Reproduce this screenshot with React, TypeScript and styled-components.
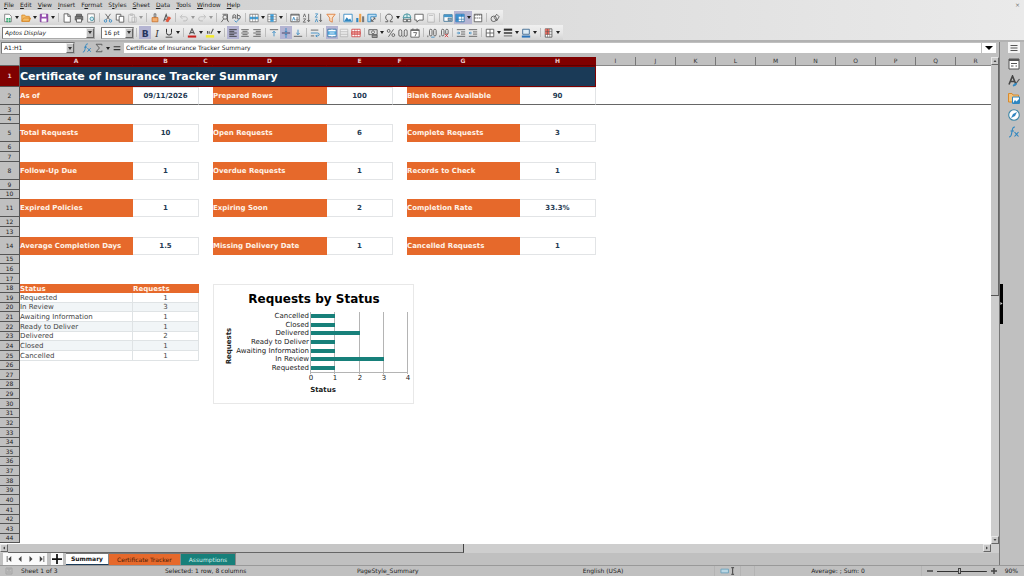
import React from 'react';
import styled, { createGlobalStyle, css } from 'styled-components';

const GlobalStyle = createGlobalStyle`
  * { box-sizing: border-box; }
  html, body { margin: 0; padding: 0; }
  body { background: #c0c0c0; color: #222; font: 6px/8px "DejaVu Sans", sans-serif; overflow: hidden; }
  button, input, select { font: inherit; color: inherit; margin: 0; padding: 0; border: 0; border-radius: 0; background: none; outline: none; }
  svg { display: block; }
`;

/* ---------- window frame ---------- */

const Window = styled.div`
  display: flex;
  flex-direction: column;
  height: 100vh;
`;

const Chrome = styled.header`
  background: linear-gradient(90deg, #cbcbcb, #dcdcdc 50%, #eaeaea);
  border-bottom: 2px solid #b2b2b2;
`;

const MenuBar = styled.nav`
  display: flex;
  align-items: center;
  gap: 6px;
  height: 10px;
  padding: 0 4px;
`;

const MenuItem = styled.button`
  line-height: 8px;
  white-space: nowrap;
`;

const CloseButton = styled.button`
  margin-left: auto;
  color: #777;
`;

const Toolbar = styled.div`
  display: flex;
  align-items: center;
  width: fit-content;
  height: 15px;
  padding: 0 2px;
  background: linear-gradient(#f0f0f0, #e7e7e7 50%, #d4d4d4);
`;

const ToolButton = styled.button<{ $active?: boolean; $faded?: boolean }>`
  display: flex;
  align-items: center;
  justify-content: center;
  width: 12px;
  height: 13px;
  background: ${(p) => (p.$active ? '#b4b4d2' : 'none')};
  svg { opacity: ${(p) => (p.$faded ? 0.3 : 1)}; }
`;

const DropArrow = styled.button<{ $active?: boolean; $faded?: boolean }>`
  display: flex;
  align-items: center;
  justify-content: center;
  width: 6px;
  height: 13px;
  background: ${(p) => (p.$active ? '#b4b4d2' : 'none')};
  opacity: ${(p) => (p.$faded ? 0.4 : 1)};
  &::after {
    content: '';
    border: 2px solid transparent;
    border-top: 3px solid #222;
    border-bottom: 0;
  }
`;

const Separator = styled.span`
  width: 1px;
  height: 9px;
  margin: 0 2px;
  background: #bdbdbd;
`;

const Combo = styled.div<{ $width: number }>`
  display: flex;
  width: ${(p) => p.$width}px;
  height: 12px;
  background: #fff;
  border: 1px solid #777;
  border-right-color: #aaa;
  border-bottom-color: #aaa;
`;

const comboText = css`
  flex: 1;
  min-width: 0;
  padding: 0 2px;
  line-height: 10px;
`;

const ComboSelect = styled.select<{ $italic?: boolean }>`
  ${comboText}
  appearance: none;
  font-style: ${(p) => (p.$italic ? 'italic' : 'normal')};
`;

const ComboInput = styled.input`
  ${comboText}
`;

const ComboButton = styled.button`
  display: flex;
  align-items: center;
  justify-content: center;
  width: 8px;
  background: #c4c4c4;
  border: 1px solid #eee;
  border-right-color: #666;
  border-bottom-color: #666;
  &::after {
    content: '';
    border: 2px solid transparent;
    border-top: 3px solid #333;
    border-bottom: 0;
  }
`;

const ToolGap = styled.span`
  width: 6px;
`;

/* ---------- main area ---------- */

const Main = styled.main`
  display: flex;
  flex: 1;
  min-height: 0;
`;

const Workspace = styled.section`
  display: flex;
  flex-direction: column;
  flex: 1;
  min-width: 0;
`;

const FormulaBar = styled.div`
  display: flex;
  align-items: center;
  height: 15px;
  padding: 0 3px 3px 1px;
`;

const FormulaTools = styled.div`
  display: flex;
  align-items: center;
  padding: 0 1px 0 6px;
`;

const FormulaInput = styled.input`
  flex: 1;
  min-width: 0;
  height: 10px;
  padding: 0 2px;
  background: #fff;
  line-height: 10px;
`;

const ExpandButton = styled.button`
  display: flex;
  align-items: center;
  justify-content: center;
  width: 14px;
  height: 10px;
  margin-left: 1px;
  background: #fff;
  &::after {
    content: '';
    border: 4px solid transparent;
    border-top: 4px solid #000;
    border-bottom: 0;
  }
`;

const SheetRow = styled.div`
  display: flex;
  flex: 1;
  min-height: 0;
`;

const Sheet = styled.div`
  position: relative;
  flex: 1;
  min-width: 0;
  overflow: hidden;
  background: #fff;
`;

const Grid = styled.table`
  width: 996px;
  table-layout: fixed;
  border-collapse: separate;
  border-spacing: 0;
  font-size: 7px;
  line-height: 8px;
`;

const ColumnHead = styled.th<{ $selected?: boolean }>`
  height: 9px;
  padding: 0;
  font-size: 6px;
  font-weight: ${(p) => (p.$selected ? 700 : 400)};
  color: ${(p) => (p.$selected ? '#e8c8c8' : '#333')};
  background: ${(p) => (p.$selected ? '#800000' : '#c0c0c0')};
  border-right: 1px solid ${(p) => (p.$selected ? '#800000' : '#777')};
  border-bottom: 1px solid ${(p) => (p.$selected ? '#5c0000' : '#888')};
`;

const Corner = styled.td`
  padding: 0;
  background: #c0c0c0;
  border-right: 1px solid #888;
  border-bottom: 1px solid #666;
`;

const RowHead = styled.th<{ $selected?: boolean }>`
  padding: 0;
  font-size: 6px;
  font-weight: ${(p) => (p.$selected ? 700 : 400)};
  color: ${(p) => (p.$selected ? '#e8c8c8' : '#222')};
  background: ${(p) => (p.$selected ? '#800000' : '#c0c0c0')};
  border-right: 1px solid #555;
  border-bottom: 1px solid #555;
`;

type CellKind = 'blank' | 'label' | 'value' | 'head' | 'text' | 'count' | 'title';

const kinds: Record<CellKind, ReturnType<typeof css>> = {
  blank: css``,
  title: css`
    color: #fff;
    background: #1a3a57;
    border: 1px solid #800000;
    border-left: 0;
    font-size: 11px;
    font-weight: 700;
    line-height: 16px;
  `,
  label: css`
    color: #fff3e8;
    background: #e6692b;
    font-weight: 700;
  `,
  value: css`
    color: #1f3b54;
    border: 1px solid #e2e4e6;
    border-left: 0;
    font-weight: 700;
    text-align: center;
  `,
  head: css`
    color: #fff3e8;
    background: #e6692b;
    font-weight: 700;
  `,
  text: css`
    color: #444;
    border-right: 1px solid #dfe3e5;
    border-bottom: 1px solid #dfe3e5;
  `,
  count: css`
    color: #444;
    border-right: 1px solid #dfe3e5;
    border-bottom: 1px solid #dfe3e5;
    text-align: center;
  `,
};

const Cell = styled.td<{ $kind: CellKind; $shaded?: boolean; $frozen?: boolean }>`
  padding: 0;
  white-space: nowrap;
  ${(p) => kinds[p.$kind]}
  ${(p) => p.$shaded && css`background: #f1f5f7;`}
  ${(p) => p.$frozen && css`border-bottom: 1px solid #666;`}
`;

const ChartFrame = styled.figure`
  position: absolute;
  margin: 0;
  background: #fff;
  border: 1px solid #e8e8e8;
  text { font-family: "DejaVu Sans", sans-serif; font-size: 7px; fill: #222; }
`;

/* ---------- scroll bars ---------- */

const VScroll = styled.div`
  display: flex;
  flex-direction: column;
  width: 8px;
  background: #cdcdcd;
`;

const VThumb = styled.div`
  height: 44%;
  flex-grow: 1;
  background: #c6c6c6;
  border-right: 1px solid #666;
  border-bottom: 1px solid #555;
`;

const VTrack = styled.div`
  height: 46%;
  flex-grow: 1;
`;

const HScroll = styled.div`
  display: flex;
  height: 9px;
  padding-right: 8px;
  background: #cecece;
`;

const HThumb = styled.div`
  width: 46%;
  border-right: 1px solid #444;
  border-bottom: 1px solid #666;
  background: #c6c6c6;
`;

const HTrack = styled.div`
  flex: 1;
`;

const ScrollButton = styled.button`
  display: flex;
  align-items: center;
  justify-content: center;
  width: 8px;
  height: 8px;
  background: #c8c8c8;
  border: 1px solid #e6e6e6;
  border-right-color: #666;
  border-bottom-color: #666;
`;

/* ---------- sheet tabs ---------- */

const TabBar = styled.div`
  display: flex;
  height: 12px;
  padding-left: 3px;
`;

const TabNav = styled.button`
  display: flex;
  align-items: center;
  justify-content: center;
  width: 11px;
  background: #fafafa;
`;

const AddTab = styled.button`
  display: flex;
  align-items: center;
  justify-content: center;
  width: 12px;
  margin: 0 3px 0 4px;
  background: #fafafa;
`;

const SheetTab = styled.button<{ $tone: 'plain' | 'orange' | 'teal' }>`
  padding: 0 8px;
  line-height: 10px;
  border-top: 1px solid #777;
  border-right: 1px solid #888;
  ${(p) => p.$tone === 'plain' && css`
    background: #fff; color: #111; font-weight: 700; border-bottom: 1px solid #1a3a57; padding: 0 5px;
  `}
  ${(p) => p.$tone === 'orange' && css`background: #e6692b; color: #4a1c06;`}
  ${(p) => p.$tone === 'teal' && css`background: #17807a; color: #cfeeea;`}
`;

/* ---------- sidebar ---------- */

const Sidebar = styled.aside`
  display: flex;
  align-items: center;
  width: 25px;
  background: #c0c0c0;
  border-left: 1px solid #777;
`;

const SidebarHandle = styled.button`
  display: flex;
  align-items: center;
  justify-content: center;
  width: 3px;
  height: 40px;
  background: #000;
`;

const SidebarDeck = styled.div`
  display: flex;
  flex-direction: column;
  align-self: stretch;
  align-items: center;
  gap: 5px;
  flex: 1;
`;

const DeckButton = styled.button<{ $boxed?: boolean }>`
  display: flex;
  align-items: center;
  justify-content: center;
  width: 12px;
  height: ${(p) => (p.$boxed ? 11 : 12)}px;
  background: ${(p) => (p.$boxed ? '#f4f4f4' : 'none')};
`;

/* ---------- status bar ---------- */

const StatusBar = styled.footer`
  display: grid;
  grid-template-columns:
    minmax(0, 160fr) minmax(0, 192fr) minmax(0, 175fr) minmax(0, 153fr) minmax(0, 35fr)
    minmax(0, 26fr) minmax(0, 14fr) minmax(0, 167fr) minmax(0, 102fr);
  align-items: center;
  height: 11px;
  border-top: 1px solid #999;
  white-space: nowrap;
`;

const StatusCell = styled.div<{ $center?: boolean; $ruled?: boolean }>`
  display: flex;
  align-items: center;
  justify-content: ${(p) => (p.$center ? 'center' : 'flex-start')};
  gap: 4px;
  height: 10px;
  padding: 0 5px;
  border-right: 1px solid ${(p) => (p.$ruled ? '#b4b4b4' : 'transparent')};
`;

const ZoomSlider = styled.input`
  appearance: none;
  flex: 1;
  min-width: 0;
  height: 6px;
  background: linear-gradient(#333, #333) center / 100% 1px no-repeat;
  &::-webkit-slider-thumb {
    appearance: none;
    width: 3px;
    height: 6px;
    background: #c0c0c0;
    border: 1px solid #444;
  }
`;

/* ---------- icons (12 x 12 grid) ---------- */

const g = '#555';
const b = '#2f86c0';

const icons: Record<string, React.ReactNode> = {
  new: <><path d="M2 1.500h5.500L10 4v6.500H2z" fill="#fff" stroke="#777" /><path d="M4 6h5v5H4z" fill="#2ea36b" /><path d="M4 8.500h5M6.500 6v5" stroke="#fff" strokeWidth=".7" /></>,
  open: <path d="M1 10V2.500h3.500l1 1.500H10v6zM1 10l2-4h8.500L10 10z" fill="#f6c06a" stroke="#d98a2b" />,
  save: <><path d="M1.500 1.500h9v9h-9z" fill="#9a4fb4" stroke="#7c3996" /><path d="M3.500 1.500h5v3h-5zM3 6.500h6v4H3z" fill="#fff" /></>,
  page: <path d="M2.500 1h5L10 3.500V11H2.500zM7 1v3h3" fill="#fff" stroke={g} />,
  print: <><path d="M3 4V1.500h6V4M3 8.500H1.500V4h9v4.500H9" fill="#777" stroke={g} /><path d="M3 7h6v4H3z" fill="#fff" stroke={g} /></>,
  preview: <><path d="M2 1h8v10H2z" fill="#fff" stroke="#777" /><circle cx="7" cy="7" r="2.200" fill="#cfe6f5" stroke="#3a8f9a" /></>,
  cut: <><path d="M3 1l5 7M9 1L4 8" stroke={g} fill="none" /><circle cx="3" cy="9.500" r="1.500" fill="none" stroke={b} /><circle cx="9" cy="9.500" r="1.500" fill="none" stroke={b} /></>,
  copy: <><path d="M1.500 1.500h5.500v7H1.500z" fill="#fff" stroke={g} /><path d="M5 4h5.500v7H5z" fill="#fff" stroke={g} /></>,
  paste: <path d="M2 2h7v9H2zM4 1h3v2H4zM6 5h5v6H6z" fill="#fff" stroke={g} />,
  brush: <><path d="M5 1h2v4H5z" fill="#fff" stroke={g} /><path d="M2.500 5.500h7v5h-7z" fill="#f3b071" stroke="#c9722e" /></>,
  clear: <><path d="M2 10L5 2l3 8M3 7.500h4" stroke={g} fill="none" strokeWidth="1.300" /><path d="M4 10l4-6 3 2-4 5z" fill="#e4573d" /></>,
  undo: <path d="M4 2L1.500 4.500 4 7M2 4.500h5.500a2.500 2.500 0 0 1 0 5H5" stroke={g} fill="none" />,
  redo: <path d="M8 2l2.500 2.500L8 7M10 4.500H4.500a2.500 2.500 0 0 0 0 5H7" stroke={g} fill="none" />,
  find: <><path d="M3 1.500h6v8" stroke={g} fill="none" /><circle cx="6" cy="5" r="2.500" fill="none" stroke={g} /><path d="M4.500 7L1.500 11M8 7l2.500 4" stroke={g} /></>,
  spell: <><path d="M1 7V4q0-2 1.700-2T4.500 4v3M1 5h3.500M6.500 1v6h2q1.500 0 1.500-2t-1.500-2h-2" stroke={g} fill="none" /><path d="M3 9l2 2 4-4" stroke={b} fill="none" /></>,
  row: <><path d="M1 1.500h10v9H1z" fill="#fff" stroke="#777" /><path d="M1 4.500h10v3H1z" fill="#3fa0dc" /><path d="M4.300 1.500v9M7.600 1.500v9" stroke="#777" strokeWidth=".7" /></>,
  column: <><path d="M1 1.500h10v9H1z" fill="#fff" stroke="#777" /><path d="M4 1.500h4v9H4z" fill="#3fa0dc" /><path d="M1 4.500h10M1 7.500h10" stroke="#777" strokeWidth=".7" /></>,
  sort: <><path d="M1 1.500h10v9H1z" fill="#fff" stroke={g} /><path d="M1 2.500h10" stroke={g} /><path d="M3 9l1.500-4L6 9" stroke={b} fill="none" /><path d="M8.500 4.500V9M7 7.500L8.500 9 10 7.500" stroke={g} fill="none" /></>,
  asc: <><path d="M1.500 5L3 1l1.500 4M1.500 7H4.500L1.500 11h3" stroke={g} fill="none" strokeWidth=".9" /><path d="M8 1v9M6.500 8.500L8 10.500l1.500-2" stroke={g} fill="none" /></>,
  desc: <><path d="M1.500 1H4.500L1.500 5h3M1.500 11L3 7l1.500 4" stroke={b} fill="none" strokeWidth=".9" /><path d="M8 1v9M6.500 8.500L8 10.500l1.500-2" stroke={g} fill="none" /></>,
  filter: <path d="M1 1.500h10L7.500 6v5l-3-1.500V6z" fill="#fbe3cb" stroke="#dd7a35" />,
  image: <><path d="M1 1.500h10v9H1z" fill="#fff" stroke={b} /><path d="M1.500 10l3-5 2.500 3 1.500-1.500 2 3.500z" fill={b} /></>,
  chart: <><path d="M1.500 6h2.500v5H1.500z" fill={b} /><path d="M5 1h2.500v10H5z" fill="#f0a24a" /><path d="M8.500 4h2.500v7H8.500z" fill="#777" /></>,
  pivot: <><path d="M1 1.500h10v3H4.500v6H1z" fill="#bcdff5" stroke={b} /><path d="M5.500 10l4-4M5.500 7.500V10H8M7.500 5.800h2V8" stroke={g} fill="none" /></>,
  omega: <path d="M1.500 10.500h3V9a4 4 0 1 1 3 0v1.500h3" fill="none" stroke={g} strokeWidth="1.100" />,
  link: <><circle cx="6" cy="5.500" r="4.500" fill="#d7ecec" stroke="#3b8b99" /><path d="M1.500 5.500h9M6 1v5" stroke="#3b8b99" /><path d="M1.500 7.500h4v3h-4zM6.500 7.500h4v3h-4z" fill="#eee" stroke={g} /></>,
  comment: <path d="M1 1.500h10v7H6L3.500 11V8.500H1z" fill="#fff" stroke={g} />,
  header: <path d="M2 1h8v10H2zM3.500 3h5" fill="#fff" stroke={g} />,
  define: <><path d="M1 2h10v8H1z" fill="#fff" stroke="#3a6f93" /><path d="M1 2h10v3H1z" fill="#4698cb" /><path d="M6 6h4v3H6z" fill="#78b0d2" stroke={g} strokeWidth=".6" /></>,
  freeze: <><path d="M1 1.500h10v9H1z" fill="#fff" stroke="#2c6ea0" /><path d="M1 1.500h10v3H4.500v6H1z" fill="#3b8fd0" /><path d="M8 1.500v9M1 7.500h10" stroke="#2c6ea0" strokeWidth=".7" /></>,
  split: <><path d="M1.500 1.500h9v9h-9z" fill="#fff" stroke={g} /><path d="M1.500 2.500h9M1.500 6h9" stroke={g} strokeDasharray="2 .7" /></>,
  shapes: <><circle cx="4.500" cy="7" r="3.300" fill="none" stroke={g} /><path d="M5 5.500L8 1.500l3 3-3 5z" fill="none" stroke={g} /></>,
  bold: <text x="2" y="10.500" fontSize="11" fontWeight="700" fill="#26355e">B</text>,
  italic: <text x="4" y="10.500" fontSize="11" fontStyle="italic" fontFamily="DejaVu Serif, serif" fill="#333">I</text>,
  underline: <><path d="M3 1v4.500a3 3 0 0 0 6 0V1" fill="none" stroke="#333" strokeWidth="1.200" /><path d="M2 11h8" stroke="#333" /></>,
  fontColor: <><path d="M3 7.500L6 1l3 6.500M4 5.500h4" fill="none" stroke={g} strokeWidth="1.300" /><path d="M1 9h10v2.500H1z" fill="#c9211e" /></>,
  highlight: <><path d="M3 7V3.500M5 7V4M7 7l3-6" fill="none" stroke={g} strokeWidth="1.300" /><path d="M1 8.500h10v3H1z" fill="#f3ea2e" /></>,
  left: <path d="M1.500 2h9M1.500 4h6M1.500 6h9M1.500 8h6M1.500 10h9" stroke="#333" />,
  center: <path d="M1.500 2h9M3 4h6M1.500 6h9M3 8h6M1.500 10h9" stroke={g} />,
  right: <path d="M1.500 2h9M4.500 4h6M1.500 6h9M4.500 8h6M1.500 10h9" stroke={g} />,
  top: <><path d="M1 2h10" stroke={g} /><path d="M6 10V4M4 6l2-2 2 2" stroke={b} fill="none" /></>,
  middle: <><path d="M1 6h10" stroke="#335" /><path d="M6 0v5M4.500 3.500L6 5l1.500-1.500M6 12V7M4.500 8.500L6 7l1.500 1.500" stroke={b} fill="none" /></>,
  bottom: <><path d="M1 10h10" stroke={g} /><path d="M6 2v6M4 6l2 2 2-2" stroke={b} fill="none" /></>,
  wrap: <><path d="M1 2.500h9M1 9.500h4" stroke={g} /><path d="M1 6h8q2 0 2 1.700T9 9.500H7M8.500 8L7 9.500 8.500 11" stroke={b} fill="none" /></>,
  merge: <><path d="M1 1.500h10v9H1z" fill="#fff" stroke="#2c6ea0" /><path d="M1 4h10v4H1z" fill="#4aa3dc" /><path d="M3 6h6M6 1.500v2M6 8.500v2" stroke="#fff" /></>,
  mergeCells: <path d="M1.500 1.500h9v9h-9zM1.500 4.500h9M1.500 7.500h9" fill="#fff" stroke={g} />,
  unmerge: <><path d="M1 1.500h10v9H1z" fill="#fff" stroke="#c44" /><path d="M1 4.500h10v3H1z" fill="#f0a3a0" stroke="#c44" /><path d="M4.500 1.500v9M7.500 1.500v9" stroke="#c44" strokeWidth=".7" /></>,
  currency: <><path d="M1 2h10v6H1z" fill="#ddd" stroke={g} /><circle cx="6" cy="5" r="1.700" fill="#fff" stroke={g} /><path d="M5 8.500h6v3H5z" fill="#999" stroke={g} /></>,
  percent: <><circle cx="3.200" cy="3.500" r="1.700" fill="none" stroke={g} /><circle cx="8.800" cy="8.500" r="1.700" fill="none" stroke={g} /><path d="M9 1.500L3 10.500" stroke={g} /></>,
  number: <><rect x="1" y="2" width="3.500" height="8" rx="1.700" fill="none" stroke={g} /><rect x="7.500" y="2" width="3.500" height="8" rx="1.700" fill="none" stroke={g} /><path d="M6 9v2" stroke={g} /></>,
  date: <><path d="M1 2h10v9H1z" fill="#fff" stroke={g} /><path d="M1 3h10M3.500 .5v2M8.500 .5v2" stroke={g} /><path d="M4 5.500h4L6 10" stroke={g} fill="none" /></>,
  addDec: <><rect x="3" y="1.500" width="3" height="8" rx="1.500" fill="none" stroke={g} /><rect x="8" y="1.500" width="3" height="8" rx="1.500" fill="none" stroke={g} /><path d="M1 9v2" stroke={g} /><path d="M5 11h4" stroke={b} /></>,
  delDec: <><rect x="3" y="1.500" width="3" height="8" rx="1.500" fill="none" stroke={g} /><rect x="8" y="1.500" width="3" height="6" rx="1.500" fill="none" stroke={g} /><path d="M1 9v2" stroke={g} /><path d="M7 7l4 4M11 7l-4 4" stroke="#d33" /></>,
  indent: <><path d="M1 2h10M6 4.700h5M6 7.300h5M1 10h10" stroke={g} /><path d="M1 6h3M3 4.500L4.500 6 3 7.500" stroke={b} fill="none" /></>,
  outdent: <><path d="M1 2h10M6 4.700h5M6 7.300h5M1 10h10" stroke={g} /><path d="M4.500 6h-3M3 4.500L1.500 6 3 7.500" stroke={b} fill="none" /></>,
  borders: <path d="M1.500 1.500h9v9h-9zM6 1.500v9M1.500 6h9" fill="#fff" stroke={g} />,
  lineStyle: <><path d="M1 2h10" stroke="#333" strokeWidth="2.500" /><path d="M1 6h10" stroke="#333" strokeWidth="1.800" /><path d="M1 9.500h10" stroke={g} /></>,
  lineColor: <><path d="M2 1.500h8v6H2z" fill="#dcebf5" stroke="#35608a" /><path d="M1 9h10v2.500H1z" fill="#2a72b8" /></>,
  conditional: <><path d="M1.500 1h8v10h-8z" fill="#fff" stroke={g} /><path d="M1.500 1h5v7h-5z" fill="#e8695c" /><path d="M1.500 4.300h8M1.500 7.700h8M4.200 1v10M6.900 1v10" stroke={g} strokeWidth=".6" /></>,
  fx: <><path d="M1 11q2 0 2.500-3l1-5Q5 .8 7 1M2.500 5h3.500" fill="none" stroke={b} strokeWidth="1.100" /><path d="M6.500 6l4 4.500M10.500 6l-4 4.500" stroke={b} strokeWidth="1.100" /></>,
  sum: <path d="M9.500 3V1.500h-7L6.500 6l-4 4.500h7V9" fill="none" stroke={g} strokeWidth="1.100" />,
  equals: <path d="M2 4.500h8M2 8h8" stroke="#333" strokeWidth="1.400" />,
  menu: <path d="M2.500 3.500h7M2.500 6h7M2.500 8.500h7" stroke="#555" />,
  properties: <><path d="M1 1h10v10H1z" fill="#fff" stroke={g} /><path d="M1 2h10" stroke={g} strokeWidth="2" /><path d="M3 5.500h6M3 8h2.500M7.500 8H9" stroke={g} /></>,
  styles: <><path d="M1 9.500L4.500 1 8 9.500M2.300 6.500h4.500" fill="none" stroke="#444" strokeWidth="1.600" /><path d="M11.500 4L8 8.500" stroke={g} strokeWidth="1.200" /><path d="M5 11q1-3 3.500-2.500Q8 11 5 11z" fill="#3a9ad4" stroke={b} /></>,
  gallery: <><path d="M.5 10V1.500H4L5 3h5.500v7z" fill="#f2c27c" stroke="#d98a2b" /><path d="M4.500 5h7v6.500h-7z" fill="#fff" stroke={b} /><path d="M5 11l2-3 1.500 1.500L11 7v4z" fill={b} /></>,
  navigator: <><circle cx="6" cy="6" r="5.300" fill="#fff" stroke="#3d86a6" strokeWidth="1.100" /><path d="M9 3L7 7 3 9l2-4z" fill={b} /></>,
};

const Icon = ({ name, size = 10 }: { name: string; size?: number }) => (
  <svg width={size} height={size} viewBox="0 0 12 12" aria-hidden="true">{icons[name]}</svg>
);

/* ---------- tool lists ---------- */

interface Tool { icon: string; label: string; menu?: boolean; active?: boolean; faded?: boolean }
const t = (icon: string, label: string, flags = ''): Tool => ({
  icon,
  label,
  menu: flags.includes('m'),
  active: flags.includes('a'),
  faded: flags.includes('f'),
});

const standardTools: Tool[][] = [
  [t('new', 'New', 'm'), t('open', 'Open', 'm'), t('save', 'Save', 'm')],
  [t('page', 'Export as PDF'), t('print', 'Print'), t('preview', 'Print preview')],
  [t('cut', 'Cut'), t('copy', 'Copy'), t('paste', 'Paste', 'mf')],
  [t('brush', 'Clone formatting'), t('clear', 'Clear formatting')],
  [t('undo', 'Undo', 'mf'), t('redo', 'Redo', 'mf')],
  [t('find', 'Find and replace'), t('spell', 'Spelling')],
  [t('row', 'Row', 'm'), t('column', 'Column', 'm')],
  [t('sort', 'Sort'), t('asc', 'Sort ascending'), t('desc', 'Sort descending'), t('filter', 'AutoFilter')],
  [t('image', 'Insert image'), t('chart', 'Insert chart'), t('pivot', 'Pivot table')],
  [t('omega', 'Special character', 'm'), t('link', 'Hyperlink'), t('comment', 'Comment'), t('header', 'Headers and footers', 'f')],
  [t('define', 'Print area'), t('freeze', 'Freeze panes', 'ma'), t('split', 'Split window')],
  [t('shapes', 'Draw functions')],
];

const formatTools: Tool[][] = [
  [t('bold', 'Bold', 'a'), t('italic', 'Italic'), t('underline', 'Underline', 'm')],
  [t('fontColor', 'Font colour', 'm'), t('highlight', 'Background colour', 'm')],
  [t('left', 'Align left', 'a'), t('center', 'Centre'), t('right', 'Align right')],
  [t('top', 'Align top'), t('middle', 'Centre vertically', 'a'), t('bottom', 'Align bottom')],
  [t('wrap', 'Wrap text')],
  [t('merge', 'Merge and centre', 'a'), t('mergeCells', 'Merge cells', 'f'), t('unmerge', 'Unmerge cells')],
  [t('currency', 'Currency', 'm'), t('percent', 'Percent'), t('number', 'Number'), t('date', 'Date')],
  [t('addDec', 'Add decimal place'), t('delDec', 'Delete decimal place')],
  [t('indent', 'Increase indent'), t('outdent', 'Decrease indent')],
  [t('borders', 'Borders', 'm'), t('lineStyle', 'Border style', 'm'), t('lineColor', 'Border colour', 'm')],
  [t('conditional', 'Conditional formatting', 'm')],
];

const ToolGroups = ({ groups }: { groups: Tool[][] }) => (
  <>
    {groups.map((group, i) => (
      <React.Fragment key={i}>
        {i > 0 && <Separator />}
        {group.map((tool) => (
          <React.Fragment key={tool.icon}>
            <ToolButton aria-label={tool.label} $active={tool.active} $faded={tool.faded}>
              <Icon name={tool.icon} />
            </ToolButton>
            {tool.menu && <DropArrow aria-label={`${tool.label} options`} $active={tool.active} $faded={tool.faded} />}
          </React.Fragment>
        ))}
      </React.Fragment>
    ))}
  </>
);

/* ---------- sheet data ---------- */

const menus: [string, number][] = [
  ['File', 0], ['Edit', 0], ['View', 0], ['Insert', 0], ['Format', 1], ['Styles', 1],
  ['Sheet', 0], ['Data', 0], ['Tools', 0], ['Window', 0], ['Help', 0],
];

const ZOOM = 0.9;
const ROW_COUNT = 44;
const TALL_ROWS = [2, 5, 8, 11, 14];
const columns = 'ABCDEFGHIJKLMNOPQR'.split('');
const columnWidths = [113, 66, 14, 114, 66, 14, 113, 76];

const rawHeight = (row: number) => (row === 1 ? 23.2 : TALL_ROWS.includes(row) ? 20.2 : 10.69);

// Rows are snapped to whole pixels after the zoom is applied.
const rowEdges = Array.from({ length: ROW_COUNT }).reduce<number[]>(
  (edges, _, i) => [...edges, edges[i] + rawHeight(i + 1) * ZOOM],
  [0],
).map(Math.round);

const metrics: Record<number, [string, string][]> = {
  2: [['As of', '09/11/2026'], ['Prepared Rows', '100'], ['Blank Rows Available', '90']],
  5: [['Total Requests', '10'], ['Open Requests', '6'], ['Complete Requests', '3']],
  8: [['Follow-Up Due', '1'], ['Overdue Requests', '1'], ['Records to Check', '1']],
  11: [['Expired Policies', '1'], ['Expiring Soon', '2'], ['Completion Rate', '33.3%']],
  14: [['Average Completion Days', '1.5'], ['Missing Delivery Date', '1'], ['Cancelled Requests', '1']],
};

const statuses: [string, number][] = [
  ['Requested', 1], ['In Review', 3], ['Awaiting Information', 1], ['Ready to Deliver', 1],
  ['Delivered', 2], ['Closed', 1], ['Cancelled', 1],
];

const STATUS_HEAD_ROW = 18;

const cellAt = (row: number, col: number): { kind: CellKind; text?: React.ReactNode } => {
  if (metrics[row] && col < 8) {
    const pair = metrics[row][Math.floor(col / 3)];
    if (col % 3 === 0) return { kind: 'label', text: pair[0] };
    if (col % 3 === 1) return { kind: 'value', text: pair[1] };
  }
  if (row === STATUS_HEAD_ROW && col < 2) return { kind: 'head', text: ['Status', 'Requests'][col] };
  const status = statuses[row - STATUS_HEAD_ROW - 1];
  if (status && col < 2) return { kind: col === 0 ? 'text' : 'count', text: status[col] };
  return { kind: 'blank' };
};

const SheetGrid = () => (
  <Grid>
    <colgroup>
      <col style={{ width: 20 }} />
      {columns.map((c, i) => <col key={c} style={{ width: columnWidths[i] ?? 40 }} />)}
    </colgroup>
    <thead>
      <tr>
        <Corner />
        {columns.map((c, i) => <ColumnHead key={c} scope="col" $selected={i < 8}>{c}</ColumnHead>)}
      </tr>
    </thead>
    <tbody>
      {Array.from({ length: ROW_COUNT }, (_, i) => i + 1).map((row) => (
        <tr key={row} style={{ height: rowEdges[row] - rowEdges[row - 1] }}>
          <RowHead scope="row" $selected={row === 1}>{row}</RowHead>
          {row === 1 && <Cell $kind="title" colSpan={8}>Certificate of Insurance Tracker Summary</Cell>}
          {columns.map((c, col) => {
            if (row === 1 && col < 8) return null;
            const cell = cellAt(row, col);
            return (
              <Cell
                key={c}
                $kind={cell.kind}
                $frozen={row === 2}
                $shaded={(cell.kind === 'text' || cell.kind === 'count') && row % 2 === 0}
              >
                {cell.text}
              </Cell>
            );
          })}
        </tr>
      ))}
    </tbody>
  </Grid>
);

const HEADER_HEIGHT = 9;
const PLOT = { left: 97, top: 27, width: 97, height: 60, max: 4 };

const StatusChart = () => {
  const step = PLOT.height / statuses.length;
  const x = (v: number) => PLOT.left + Math.round((v * PLOT.width) / PLOT.max);
  const bottom = PLOT.top + PLOT.height;
  return (
    <ChartFrame style={{ left: 213, top: HEADER_HEIGHT + rowEdges[17] }}>
      <svg width="199" height="118" viewBox="0 0 199 118" role="img" aria-label="Requests by Status">
        <text x="100" y="18" textAnchor="middle" style={{ fontSize: 12, fontWeight: 700, fill: '#000' }}>Requests by Status</text>
        {[0, 1, 2, 3, 4].map((v) => (
          <g key={v}>
            <path d={`M${x(v) - 0.5} ${PLOT.top}V${bottom + 2}`} stroke="#b4b4b4" />
            <text x={x(v)} y={bottom + 8} textAnchor="middle">{v}</text>
          </g>
        ))}
        <path d={`M${PLOT.left} ${bottom + 0.5}H${PLOT.left + PLOT.width}`} stroke="#b4b4b4" />
        {[...statuses].reverse().map(([label, count], i) => {
          const middle = Math.round(PLOT.top + step * (i + 0.5));
          return (
            <g key={label}>
              <rect x={PLOT.left} y={middle - 2} width={x(count) - PLOT.left} height="4" fill="#17807a" />
              <text x={PLOT.left - 2} y={middle + 2} textAnchor="end">{label}</text>
            </g>
          );
        })}
        <text x="109" y="107" textAnchor="middle" style={{ fontWeight: 700 }}>Status</text>
        <text transform="translate(17 61) rotate(-90)" textAnchor="middle" style={{ fontWeight: 700 }}>Requests</text>
      </svg>
    </ChartFrame>
  );
};

const Glyph = ({ d, size = 6, fill = '#444' }: { d: string; size?: number; fill?: string }) => (
  <svg width={size} height={size} viewBox="0 0 8 8" aria-hidden="true"><path d={d} fill={fill} /></svg>
);

export default function App() {
  return (
    <Window>
      <GlobalStyle />
      <Chrome>
        <MenuBar>
          {menus.map(([name, key]) => (
            <MenuItem key={name}>{name.slice(0, key)}<u>{name[key]}</u>{name.slice(key + 1)}</MenuItem>
          ))}
          <CloseButton aria-label="Close document">×</CloseButton>
        </MenuBar>
        <Toolbar role="toolbar" aria-label="Standard"><ToolGroups groups={standardTools} /></Toolbar>
        <Toolbar role="toolbar" aria-label="Formatting">
          <Combo $width={93}>
            <ComboSelect aria-label="Font name" $italic defaultValue="Aptos Display"><option>Aptos Display</option></ComboSelect>
            <ComboButton aria-label="Font list" />
          </Combo>
          <ToolGap />
          <Combo $width={33}>
            <ComboSelect aria-label="Font size" defaultValue="16 pt"><option>16 pt</option></ComboSelect>
            <ComboButton aria-label="Size list" />
          </Combo>
          <Separator />
          <ToolGroups groups={formatTools} />
        </Toolbar>
      </Chrome>

      <Main>
        <Workspace>
          <FormulaBar>
            <Combo $width={74}>
              <ComboInput aria-label="Name box" defaultValue="A1:H1" />
              <ComboButton aria-label="Named ranges" />
            </Combo>
            <FormulaTools>
              <ToolButton aria-label="Function wizard"><Icon name="fx" /></ToolButton>
              <ToolButton aria-label="Select function"><Icon name="sum" /></ToolButton>
              <DropArrow aria-label="Function list" />
              <ToolButton aria-label="Formula"><Icon name="equals" /></ToolButton>
            </FormulaTools>
            <FormulaInput aria-label="Input line" defaultValue="Certificate of Insurance Tracker Summary" />
            <ExpandButton aria-label="Expand formula bar" />
          </FormulaBar>

          <SheetRow>
            <Sheet>
              <SheetGrid />
              <StatusChart />
            </Sheet>
            <VScroll>
              <ScrollButton aria-label="Scroll up"><Glyph d="M4 2l3 4H1z" size={4} /></ScrollButton>
              <VThumb />
              <VTrack />
              <ScrollButton aria-label="Scroll down"><Glyph d="M4 6l3-4H1z" size={4} /></ScrollButton>
            </VScroll>
          </SheetRow>

          <HScroll>
            <ScrollButton aria-label="Scroll left"><Glyph d="M2 4l4-3v6z" size={4} /></ScrollButton>
            <HThumb />
            <HTrack />
            <ScrollButton aria-label="Scroll right"><Glyph d="M6 4L2 1v6z" size={4} /></ScrollButton>
          </HScroll>

          <TabBar>
            <TabNav aria-label="First sheet"><Glyph d="M1 0h1v8H1zM7 0v8L3 4z" /></TabNav>
            <TabNav aria-label="Previous sheet"><Glyph d="M6 0v8L2 4z" /></TabNav>
            <TabNav aria-label="Next sheet"><Glyph d="M2 0v8l4-4z" /></TabNav>
            <TabNav aria-label="Last sheet"><Glyph d="M6 0h1v8H6zM1 0v8l4-4z" /></TabNav>
            <AddTab aria-label="Add sheet"><Glyph d="M3.300 0h1.400v3.300H8v1.400H4.700V8H3.300V4.700H0V3.300h3.300z" size={10} fill="#111" /></AddTab>
            <SheetTab $tone="plain">Summary</SheetTab>
            <SheetTab $tone="orange">Certificate Tracker</SheetTab>
            <SheetTab $tone="teal">Assumptions</SheetTab>
          </TabBar>
        </Workspace>

        <Sidebar>
          <SidebarHandle aria-label="Hide sidebar"><Glyph d="M1 0v8l6-4z" size={3} fill="#ccc" /></SidebarHandle>
          <SidebarDeck>
            <DeckButton aria-label="Sidebar settings" $boxed><Icon name="menu" size={12} /></DeckButton>
            <DeckButton aria-label="Properties"><Icon name="properties" size={12} /></DeckButton>
            <DeckButton aria-label="Styles"><Icon name="styles" size={12} /></DeckButton>
            <DeckButton aria-label="Gallery"><Icon name="gallery" size={12} /></DeckButton>
            <DeckButton aria-label="Navigator"><Icon name="navigator" size={12} /></DeckButton>
            <DeckButton aria-label="Functions"><Icon name="fx" size={12} /></DeckButton>
          </SidebarDeck>
        </Sidebar>
      </Main>

      <StatusBar>
        <StatusCell>
          <svg width="8" height="8" viewBox="0 0 8 8" aria-hidden="true"><path d="M1 1h6v6H1zM3 1v2h2V1M2 5h4" fill="none" stroke="#a4a4a4" /></svg>
          <span />
          Sheet 1 of 3
        </StatusCell>
        <StatusCell>Selected: 1 row, 8 columns</StatusCell>
        <StatusCell>PageStyle_Summary</StatusCell>
        <StatusCell $center>English (USA)</StatusCell>
        <StatusCell $ruled />
        <StatusCell $ruled>
          <svg width="16" height="8" viewBox="0 0 16 8" aria-hidden="true">
            <path d="M1 2h8v4H1z" fill="#b9d6e4" stroke="#6fa3bd" />
            <path d="M12 .5h3M12 7.500h3M13.500 1v6" stroke="#333" />
          </svg>
        </StatusCell>
        <StatusCell $ruled />
        <StatusCell $center $ruled>Average: ; Sum: 0</StatusCell>
        <StatusCell>
          <button aria-label="Zoom out"><Glyph d="M0 3h8v2H0z" /></button>
          <ZoomSlider type="range" min="0" max="100" defaultValue="45" aria-label="Zoom" />
          <button aria-label="Zoom in"><Glyph d="M3 0h2v3h3v2H5v3H3V5H0V3h3z" /></button>
          <span />
          90%
        </StatusCell>
      </StatusBar>
    </Window>
  );
}
